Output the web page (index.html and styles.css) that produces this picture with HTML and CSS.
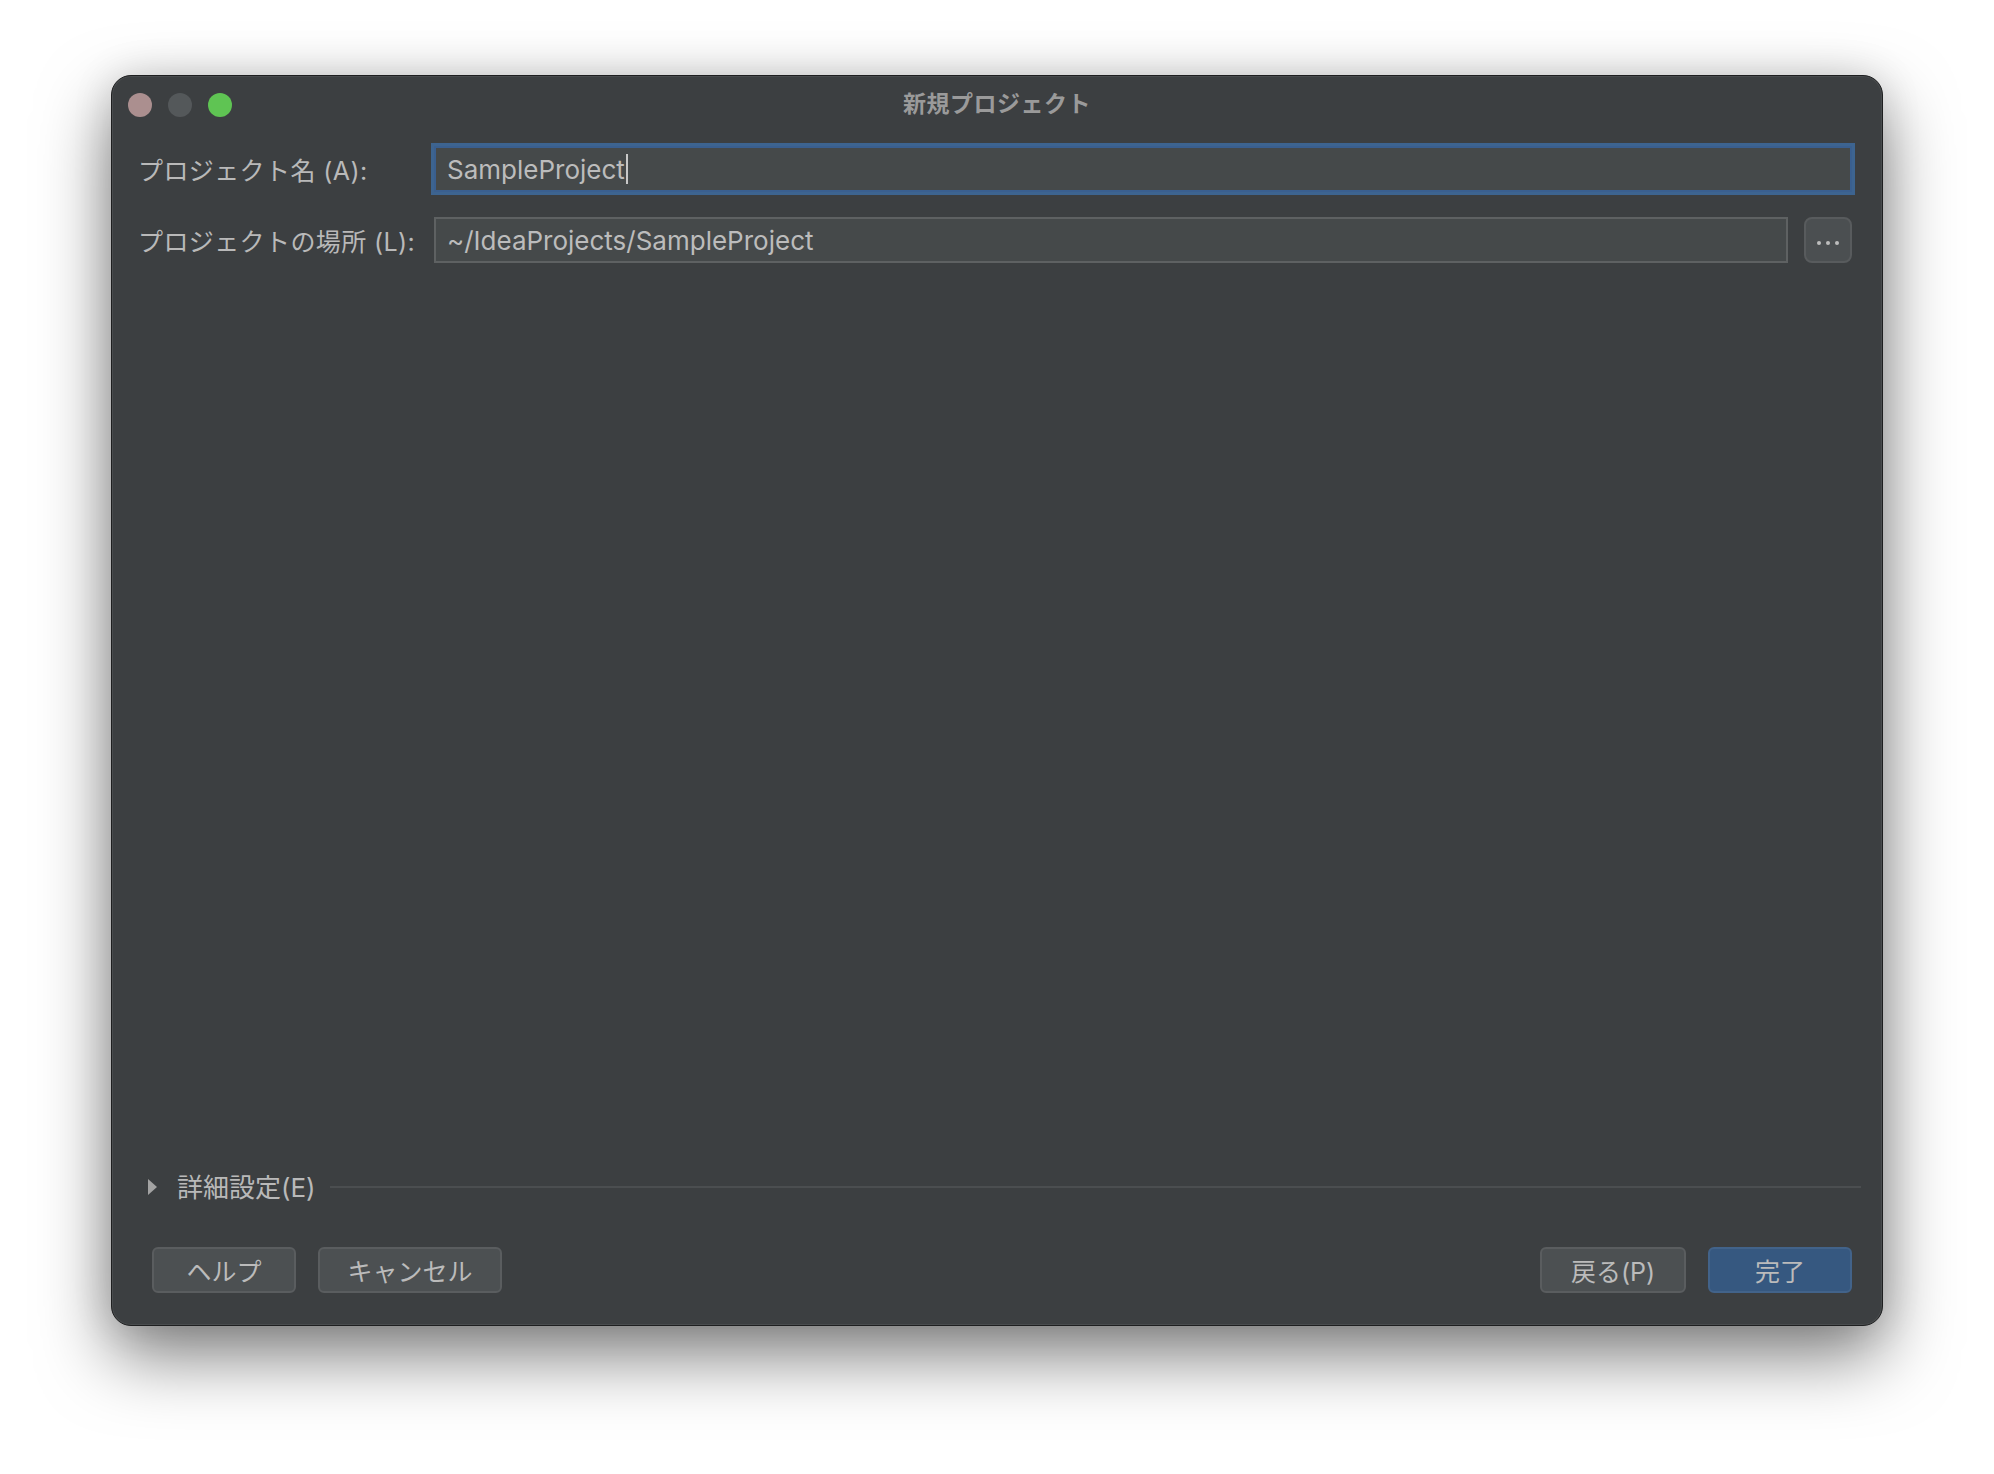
FILE: index.html
```html
<!DOCTYPE html>
<html lang="ja">
<head>
<meta charset="utf-8">
<title>新規プロジェクト</title>
<link rel="stylesheet" href="styles.css">
</head>
<body>
<div class="window">
  <div class="titlebar">
    <div class="lights">
      <span class="light light-close"></span>
      <span class="light light-min"></span>
      <span class="light light-max"></span>
    </div>
    <div class="title">新規プロジェクト</div>
    <div></div>
  </div>
  <div class="form">
    <label class="label">プロジェクト名 (A):</label>
    <div class="field field-focus"><span class="value">SampleProject</span><span class="caret"></span></div>
    <label class="label">プロジェクトの場所 (L):</label>
    <div class="path-row">
      <div class="field field-path"><span class="value">~/IdeaProjects/SampleProject</span></div>
      <div class="browse"><span class="dot"></span><span class="dot"></span><span class="dot"></span></div>
    </div>
  </div>
  <div class="spacer"></div>
  <div class="advanced">
    <span class="triangle"></span>
    <span class="advanced-text">詳細設定(E)</span>
    <span class="rule"></span>
  </div>
  <div class="buttons">
    <div class="btn-group">
      <div class="btn btn-help">ヘルプ</div>
      <div class="btn btn-cancel">キャンセル</div>
    </div>
    <div class="btn-group">
      <div class="btn btn-back">戻る(P)</div>
      <div class="btn btn-default">完了</div>
    </div>
  </div>
</div>
</body>
</html>
```
FILE: styles.css
```css
html, body {
  margin: 0;
  padding: 0;
  background: #ffffff;
}
body {
  padding-top: 75px;
  padding-bottom: 148px;
  min-height: 1474px;
  box-sizing: border-box;
  font-family: "Inter", "Noto Sans CJK JP", sans-serif;
  color: #bbbbbb;
}
.window {
  box-sizing: border-box;
  width: 1772px;
  height: 1251px;
  margin: 0 auto;
  background: #3c3f41;
  border: 1px solid #1e1f20;
  border-radius: 20px;
  box-shadow: inset 0 0 0 1px rgba(255,255,255,0.07), 0 30px 70px rgba(0,0,0,0.5), 0 0 40px rgba(0,0,0,0.12);
  display: flex;
  flex-direction: column;
}
.titlebar {
  height: 57px;
  display: grid;
  grid-template-columns: 1fr auto 1fr;
  align-items: center;
}
.lights {
  display: flex;
  gap: 16px;
  padding-left: 16px;
}
.light {
  width: 24px;
  height: 24px;
  border-radius: 50%;
  display: block;
}
.light-close { background: #ab8f8f; }
.light-min { background: #54585a; }
.light-max { background: #5fc453; }
.title {
  font-family: "Noto Sans CJK JP", sans-serif;
  font-weight: 700;
  font-size: 23px;
  color: #9a9a9a;
  letter-spacing: 0.5px;
  margin-top: -6px;
}
.form {
  margin-top: 13px;
  padding: 0 30px 0 26px;
  display: grid;
  grid-template-columns: 296px 1fr;
  row-gap: 25px;
  align-items: center;
}
.label {
  font-size: 25px;
  letter-spacing: 0.4px;
  color: #b9b9b9;
  white-space: nowrap;
}
.field {
  box-sizing: border-box;
  height: 46px;
  background: #45494a;
  border: 2px solid #5e6162;
  display: flex;
  align-items: center;
  padding-left: 11px;
  font-size: 26px;
  color: #bcbcbc;
}
.field-focus {
  border: 2px solid #3a5f8f;
  box-shadow: 0 0 0 3px #3d6490;
}
.caret {
  display: block;
  width: 2px;
  height: 30px;
  background: #c8c8c8;
  margin-left: 1px;
}
.path-row {
  display: flex;
  gap: 16px;
}
.field-path {
  flex: 1;
}
.browse {
  box-sizing: border-box;
  width: 48px;
  height: 46px;
  background: #4b4f51;
  border: 2px solid #585b5d;
  border-radius: 8px;
  display: flex;
  align-items: center;
  justify-content: center;
  gap: 5px;
  padding-top: 6px;
}
.dot {
  width: 4px;
  height: 4px;
  border-radius: 50%;
  background: #bdbdbd;
  display: block;
}
.spacer {
  flex: 1;
}
.advanced {
  display: flex;
  align-items: center;
  padding: 0 21px 0 36px;
  height: 32px;
  margin-top: -4px;
}
.triangle {
  width: 0;
  height: 0;
  border-top: 8px solid transparent;
  border-bottom: 8px solid transparent;
  border-left: 9px solid #a3a3a3;
  margin-right: 20px;
  margin-top: 3px;
}
.advanced-text {
  font-size: 26px;
  color: #b9b9b9;
  white-space: nowrap;
}
.rule {
  flex: 1;
  height: 2px;
  background: #4b4e50;
  margin-left: 14px;
  margin-top: 3px;
}
.buttons {
  display: flex;
  justify-content: space-between;
  padding: 0 30px 32px 40px;
  margin-top: 46px;
}
.btn-group {
  display: flex;
  gap: 22px;
}
.btn {
  box-sizing: border-box;
  height: 46px;
  background: #4c5052;
  border: 2px solid #5a5d5f;
  border-radius: 6px;
  display: flex;
  align-items: center;
  justify-content: center;
  font-size: 25px;
  color: #bbbbbb;
}
.btn-help { width: 144px; }
.btn-cancel { width: 184px; }
.btn-back { width: 146px; }
.btn-default {
  width: 144px;
  background: #365880;
  border-color: #42638a;
}
```
